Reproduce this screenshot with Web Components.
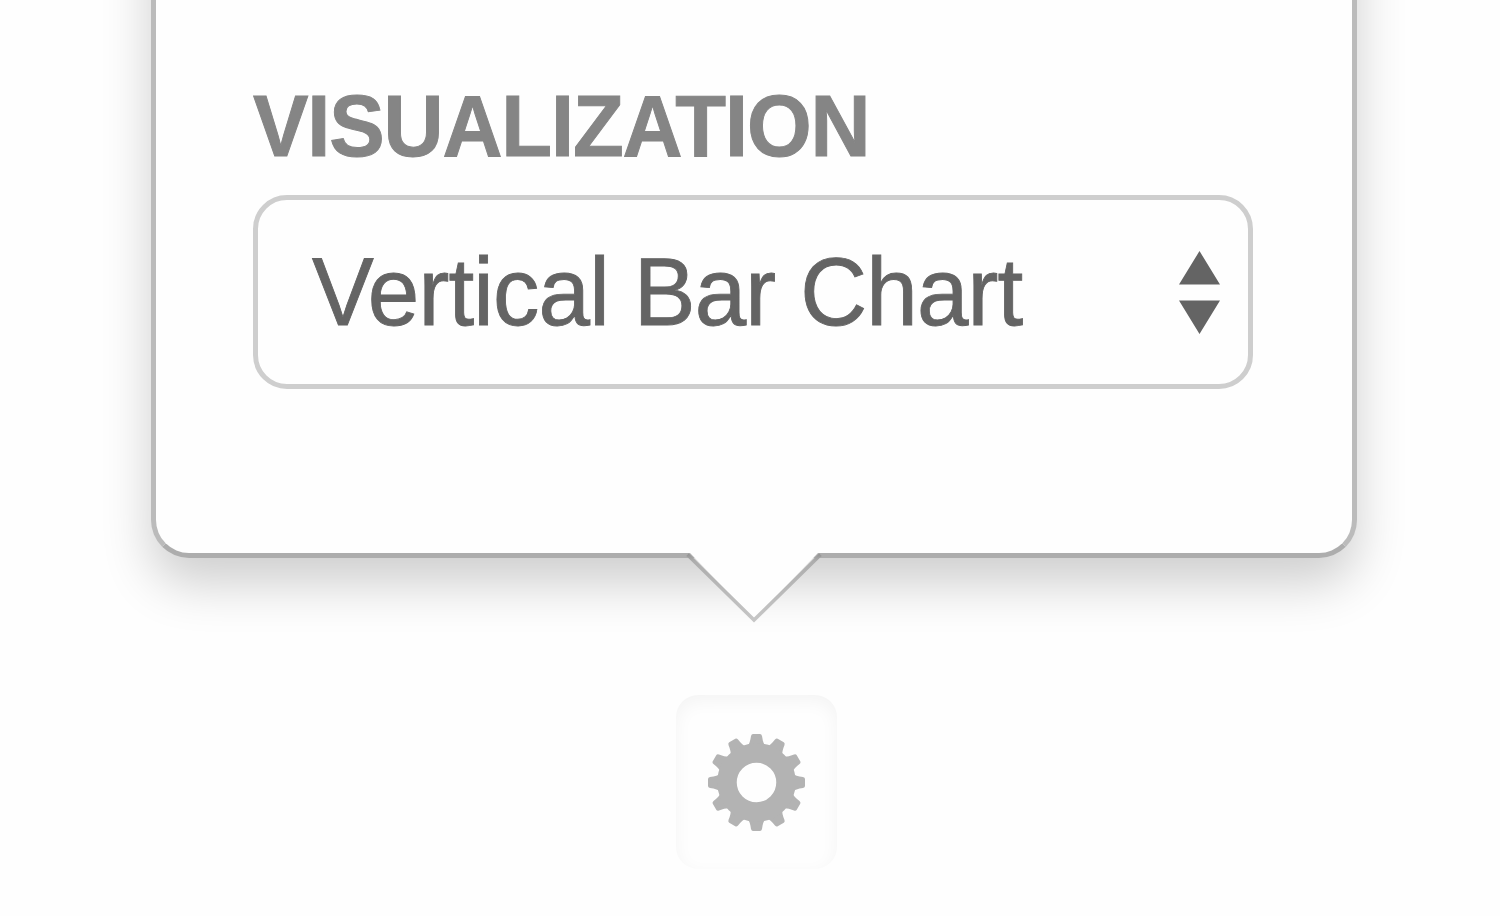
<!DOCTYPE html>
<html lang="en">
<head>
<meta charset="utf-8">
<title>Chart settings</title>
<style>
html, body { margin: 0; height: 100%; overflow: hidden; background: #fefefe; }
body { font-family: "Liberation Sans", Arial, sans-serif; }
</style>
</head>
<body>
<settings-stage>
  <pop-over>
    <form-field label="VISUALIZATION">
      <select-box>Vertical Bar Chart</select-box>
    </form-field>
  </pop-over>
  <gear-button></gear-button>
</settings-stage>
<script>
function define(name, html, setup) {
  const template = document.createElement('template');
  template.innerHTML = html;
  customElements.define(name, class extends HTMLElement {
    connectedCallback() {
      if (this.shadowRoot) return;
      this.attachShadow({ mode: 'open' }).append(template.content.cloneNode(true));
      if (setup) setup(this, this.shadowRoot);
    }
  });
}

define('settings-stage', `<style>
  :host { display: flex; flex-direction: column; align-items: center; width: 1500px; height: 916px; box-sizing: border-box; padding-left: 8px; overflow: hidden; }
</style><slot></slot>`);

define('pop-over', `<style>
  :host { display: block; flex: none; position: relative; box-sizing: border-box; width: 1206px; height: 658px; margin-top: -100px; padding: 177px 98px 0 97px; border: 5px solid #bbb; border-bottom-color: #adadad; border-radius: 38px; background: #fefefe; box-shadow: 0 26px 50px rgba(0,0,0,.19); }
  .arrow { position: absolute; left: 529px; bottom: -72px; display: block; }
</style><slot></slot>
<svg class="arrow" width="140" height="74" viewBox="0 0 140 74">
  <defs><linearGradient id="edge" gradientUnits="userSpaceOnUse" x1="0" y1="2" x2="0" y2="70"><stop offset="0" stop-color="#8f8f8f"/><stop offset=".12" stop-color="#adadad"/><stop offset="1" stop-color="#c6c6c6"/></linearGradient></defs>
  <path d="M4 1H134L69 68Z" fill="#fefefe"/>
  <path d="M2.5 3.8 69 69 135.5 3.8" fill="none" stroke="url(#edge)" stroke-width="3.6"/>
</svg>`);

define('form-field', `<style>
  :host { display: flex; flex-direction: column; }
  .label { font-size: 87.5px; line-height: 88px; height: 113px; font-weight: 700; letter-spacing: -1.2px; color: #858585; -webkit-text-stroke: 1px #858585; white-space: nowrap; transform: scaleX(.95); transform-origin: left; }
</style><span class="label"></span><slot></slot>`, (host, root) => {
  root.querySelector('.label').textContent = host.getAttribute('label');
});

define('select-box', `<style>
  :host { display: flex; align-items: center; justify-content: space-between; box-sizing: border-box; width: 1000px; height: 194px; padding: 0 28px 0 54px; border: 5px solid #cecece; border-radius: 34px; color: #646464; font-size: 96.5px; line-height: 110px; letter-spacing: -.9px; white-space: nowrap; }
  span { transform: scaleX(.96); transform-origin: left; -webkit-text-stroke: .9px #646464; }
  svg { display: block; flex: none; }
</style><span><slot></slot></span>
<svg width="41" height="83" viewBox="0 0 41 83"><path d="M20.5 0 41 33.5H0Z M0 49.5H41L20.5 83Z" fill="#646464"/></svg>`);

define('gear-button', `<style>
  :host { display: grid; place-items: center; flex: none; box-sizing: border-box; width: 161px; height: 174px; margin-top: 137px; margin-left: 5px; border-radius: 22px; box-shadow: inset 0 6px 18px rgba(0,0,0,.045); }
  svg { display: block; }
</style><svg width="100" height="100" viewBox="-49.5 -50.5 100 100"><g fill="#b3b3b3" class="teeth"></g><circle r="29.5" fill="none" stroke="#b3b3b3" stroke-width="19.5"/></svg>`, (host, root) => {
  const teeth = root.querySelector('.teeth');
  for (let i = 0; i < 12; i++) {
    const tooth = document.createElementNS('http://www.w3.org/2000/svg', 'path');
    tooth.setAttribute('d', 'M-9 -36Q-6.5 -39 -5.5 -46.5Q-5 -48.5 -3.5 -48.5H3.5Q5 -48.5 5.5 -46.5Q6.5 -39 9 -36Z');
    tooth.setAttribute('transform', `rotate(${i * 30})`);
    teeth.append(tooth);
  }
});
</script>
</body>
</html>
